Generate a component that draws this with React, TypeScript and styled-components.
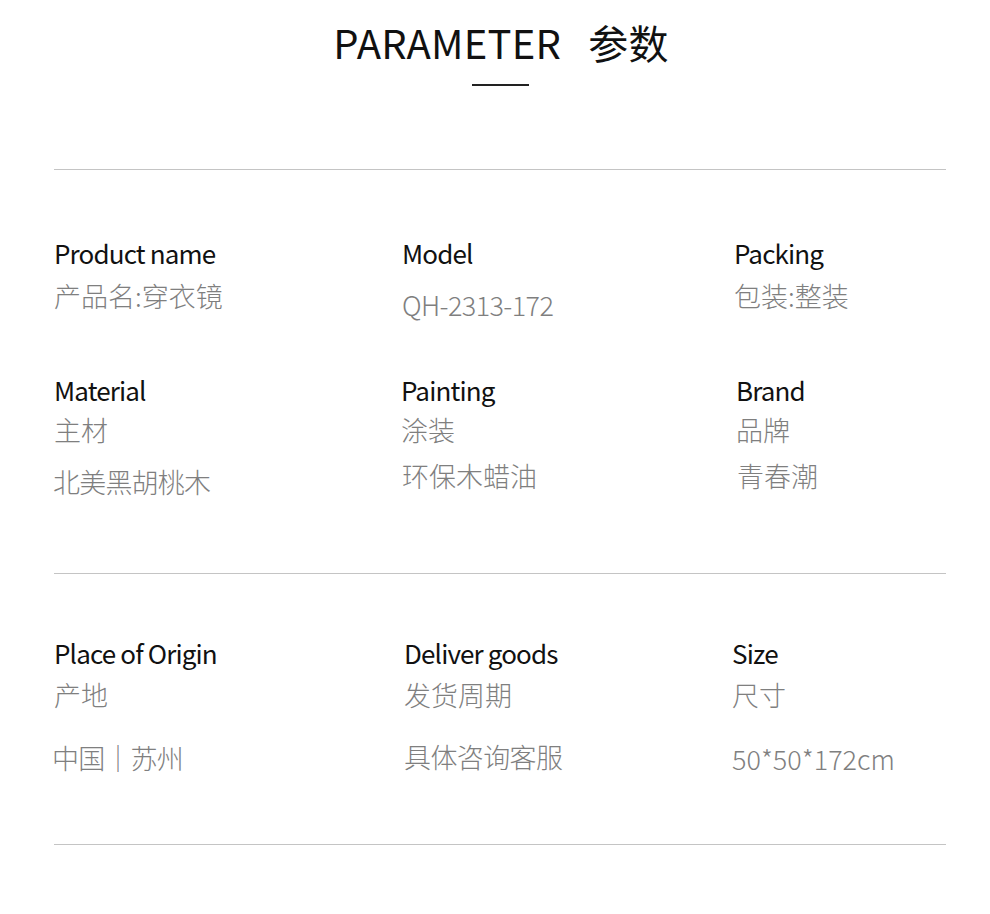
import React from "react";
import styled, { createGlobalStyle } from "styled-components";

const Global = createGlobalStyle`
  html, body { margin: 0; padding: 0; background: #fff; }
  body { font-family: "Noto Sans CJK SC", "Noto Sans", sans-serif; }
`;

const Page = styled.div`
  width: 990px;
  box-sizing: border-box;
  padding: 0 44px 0 54px;
  background: #fff;
`;

const Header = styled.header`
  display: flex;
  flex-direction: column;
  align-items: center;
  padding-top: 18px;
`;

const Title = styled.h1`
  margin: 0 0 0 2px;
  font-size: 40px;
  font-weight: 400;
  line-height: 48px;
  color: #111;
  letter-spacing: 0.2px;
  word-spacing: 18px;
`;

const TitleBar = styled.div`
  width: 57px;
  height: 1.5px;
  background: #222;
  margin-top: 18px;
`;

const Divider = styled.hr<{ $top: number }>`
  border: none;
  height: 1px;
  background: #c4c4c4;
  margin: ${(p) => p.$top}px 0 0;
`;

const Grid = styled.div<{ $top: number }>`
  display: grid;
  grid-template-columns: 349px 332px 1fr;
  padding-top: ${(p) => p.$top}px;
`;

const Cell = styled.div<{ $dx?: number }>`
  display: flex;
  flex-direction: column;
  margin-left: ${(p) => p.$dx ?? 0}px;
`;

const Label = styled.div`
  font-size: 26px;
  line-height: 34px;
  color: #111;
  letter-spacing: -0.85px;
`;

const Value = styled.div<{ $gap?: number; $ls?: number; $dx?: number }>`
  font-size: 27px;
  line-height: 34px;
  color: #7f7f7f;
  font-weight: 300;
  margin-top: ${(p) => p.$gap ?? 8}px;
  margin-left: ${(p) => p.$dx ?? 0}px;
  letter-spacing: ${(p) => p.$ls ?? 0}px;
`;

type Val = { text: string; gap: number; ls?: number; dx?: number };
type Item = { label: string; values: Val[]; dx?: number };

const Row = ({ items, top }: { items: Item[]; top: number }) => (
  <Grid $top={top}>
    {items.map((it) => (
      <Cell key={it.label} $dx={it.dx}>
        <Label>{it.label}</Label>
        {it.values.map((v) => (
          <Value key={v.text} $gap={v.gap} $ls={v.ls} $dx={v.dx}>
            {v.text}
          </Value>
        ))}
      </Cell>
    ))}
  </Grid>
);

export default function App() {
  return (
    <Page>
      <Global />
      <Header>
        <Title>PARAMETER 参数</Title>
        <TitleBar />
      </Header>
      <Divider $top={83} />
      <Row
        top={66}
        items={[
          { label: "Product name", values: [{ text: "产品名:穿衣镜", gap: 9 }] },
          { label: "Model", dx: -1, values: [{ text: "QH-2313-172", gap: 18, ls: -0.6 }] },
          { label: "Packing", dx: -1, values: [{ text: "包装:整装", gap: 9 }] },
        ]}
      />
      <Row
        top={51}
        items={[
          {
            label: "Material",
            values: [
              { text: "主材", gap: 6 },
              { text: "北美黑胡桃木", gap: 18, ls: -0.8, dx: -1 },
            ],
          },
          {
            label: "Painting",
            dx: -2,
            values: [
              { text: "涂装", gap: 6 },
              { text: "环保木蜡油", gap: 12, dx: 1 },
            ],
          },
          {
            label: "Brand",
            dx: 1,
            values: [
              { text: "品牌", gap: 6 },
              { text: "青春潮", gap: 12, dx: 1 },
            ],
          },
        ]}
      />
      <Divider $top={74} />
      <Row
        top={62}
        items={[
          {
            label: "Place of Origin",
            values: [
              { text: "产地", gap: 8 },
              { text: "中国｜苏州", gap: 29, ls: -0.8, dx: -2 },
            ],
          },
          {
            label: "Deliver goods",
            dx: 1,
            values: [
              { text: "发货周期", gap: 8 },
              { text: "具体咨询客服", gap: 28, ls: -0.6 },
            ],
          },
          {
            label: "Size",
            dx: -3,
            values: [
              { text: "尺寸", gap: 8 },
              { text: "50*50*172cm", gap: 30 },
            ],
          },
        ]}
      />
      <Divider $top={68} />
    </Page>
  );
}
